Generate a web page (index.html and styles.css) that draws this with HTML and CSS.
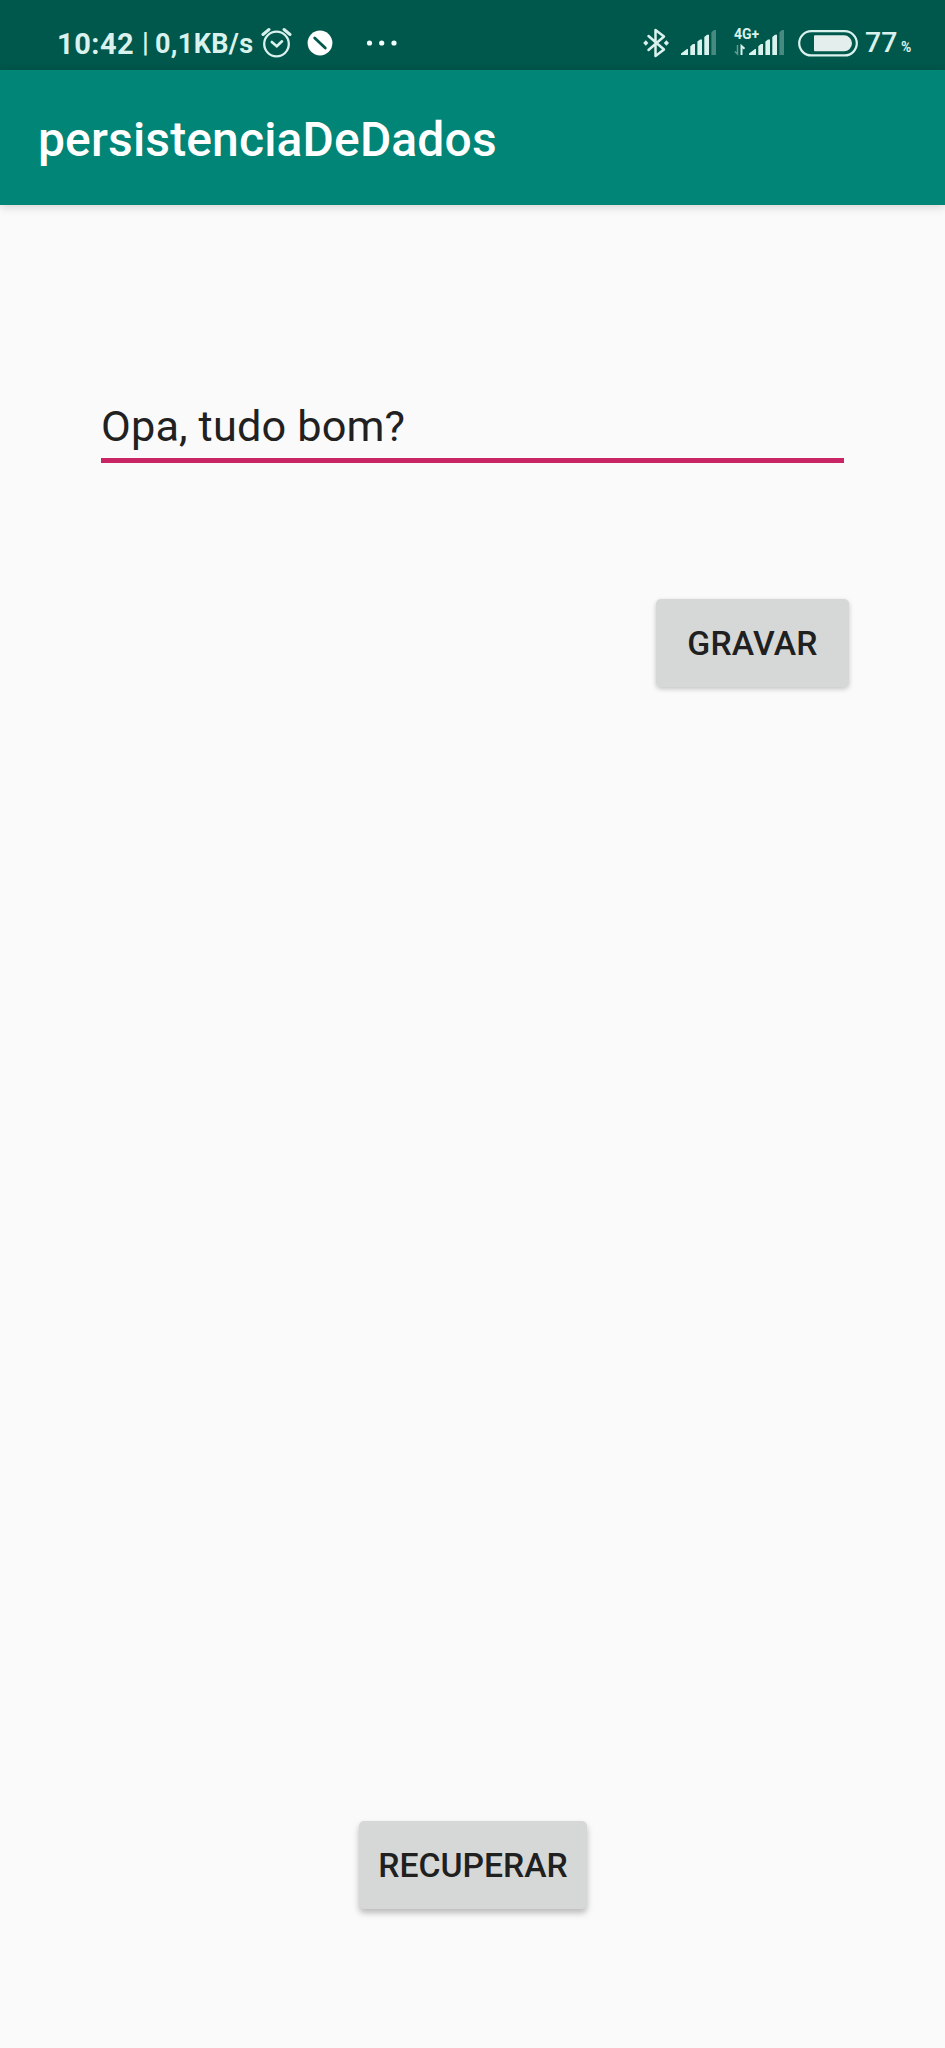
FILE: index.html
```html
<!DOCTYPE html>
<html lang="pt">
<head>
<meta charset="utf-8">
<title>persistenciaDeDados</title>
<link rel="stylesheet" href="styles.css">
</head>
<body>
<div class="status">
  <span class="clock">10:42</span>
  <span class="divider">|</span>
  <span class="speed">0,1KB/s</span>
  <svg class="alarm" width="32" height="32" viewBox="0 0 32 32" fill="none" stroke="#d9f2ed" stroke-width="2.3" stroke-linecap="round"><circle cx="15.5" cy="17" r="12.3"/><path d="M2 7.500 8 2.500M23 2.500l6 5" stroke-width="3"/><path d="m10.800 15 5 4.300 5.200-5" stroke-width="2.600"/></svg>
  <svg class="silent" width="26" height="26" viewBox="0 0 26 26"><circle cx="13" cy="13" r="12.400" fill="#fff"/><path d="m7.700 8 10.600 10" stroke="#00574b" stroke-width="2.800" stroke-linecap="round"/></svg>
  <svg class="more" width="32" height="8" viewBox="0 0 32 8" fill="#f2fffc"><circle cx="3.500" cy="4" r="2.600"/><circle cx="15.700" cy="4" r="2.600"/><circle cx="28" cy="4" r="2.600"/></svg>
  <span class="spacer"></span>
  <svg class="bluetooth" width="28" height="32" viewBox="0 0 28 32" fill="none" stroke="#d9f2ed" stroke-width="2.500" stroke-linejoin="round" stroke-linecap="round"><path d="m5.500 9 15.500 13.500L12.500 29V3l8.500 6.500L5.500 23"/><path d="m2.800 13.300 2.600 2.700-2.600 2.700L.2 16ZM23.400 13.300l2.600 2.700-2.600 2.700-2.600-2.700Z" fill="#d9f2ed" stroke="none"/></svg>
  <svg class="signal" width="36" height="26" viewBox="0 0 36 26" fill="#d9f2ed"><path d="M0 25v-1.600L6 19h1v6ZM9.300 25V16.300L12 14h2v11ZM16.400 25V11.600L19 9.500h2V25ZM23.300 25V7L26 4.700h2V25Z"/><path d="M30.400 25V2.300L33 0h2v25Z" opacity=".33"/></svg>
  <div class="mobile">
    <span class="network">4G+</span>
    <svg width="12" height="12" viewBox="0 0 12 12" fill="none" stroke="#d9f2ed" stroke-width="1.500"><path d="M3.500 1v9L.8 7.500" opacity=".45"/><path d="M7.500 11V2l3 2.700" stroke-width="2"/></svg>
  </div>
  <svg class="signal signal-two" width="36" height="26" viewBox="0 0 36 26" fill="#d9f2ed"><path d="M0 25v-1.600L6 19h1v6ZM9.300 25V16.300L12 14h2v11ZM16.400 25V11.600L19 9.500h2V25ZM23.300 25V7L26 4.700h2V25Z"/><path d="M30.400 25V2.300L33 0h2v25Z" opacity=".33"/></svg>
  <svg class="battery" width="60" height="27" viewBox="0 0 60 27"><rect x="1.200" y="1.200" width="57.600" height="24.200" rx="12.100" fill="none" stroke="#d9f2ed" stroke-width="2.200"/><path d="M17 5.300h29a8 8 0 0 1 0 16H17a1 1 0 0 1-1-1v-14a1 1 0 0 1 1-1Z" fill="#e4efed"/></svg>
  <span class="level">77</span>
  <span class="percent">%</span>
</div>
<header class="appbar"><h1>persistenciaDeDados</h1></header>
<main class="content">
  <div class="field">Opa, tudo bom?</div>
  <button class="button save">GRAVAR</button>
  <button class="button restore">RECUPERAR</button>
</main>
</body>
</html>
```
FILE: styles.css
```css
body {
  margin: 0;
  height: 2048px;
  display: flex;
  flex-direction: column;
  background: #fafafa;
  font-family: Roboto, sans-serif;
  overflow: hidden;
}

.status {
  box-sizing: border-box;
  height: 70px;
  flex: none;
  display: flex;
  align-items: flex-start;
  padding-left: 57px;
  background: #00574b;
  color: #d9f2ed;
  line-height: 34px;
  white-space: nowrap;
}

.status > * { flex: none; }
.status .spacer { flex: 1; }

.clock {
  width: 85px;
  margin-top: 27px;
  font-size: 29px;
  font-weight: 700;
  letter-spacing: 0.5px;
}

.divider {
  width: 13px;
  margin-top: 26px;
  font-size: 27px;
  font-weight: 700;
}

.speed {
  width: 106px;
  margin-top: 27px;
  font-size: 27px;
  font-weight: 700;
  letter-spacing: 0.35px;
}

.alarm { margin-top: 27px; }
.silent { margin: 30px 0 0 14px; }
.more { margin: 39px 0 0 33px; }
.bluetooth { margin-top: 27px; }
.signal { margin: 30px 0 0 10px; }

.mobile {
  width: 14px;
  margin: 26px 0 0 17px;
}

.mobile svg { display: block; }

.network {
  display: block;
  height: 18px;
  font-size: 14px;
  font-weight: 700;
  line-height: 16px;
}

.signal-two { margin-left: 1px; }
.battery { margin: 30px 0 0 13px; }

.level {
  width: 36px;
  margin: 26px 0 0 7px;
  font-size: 28.5px;
  font-weight: 500;
}

.percent {
  width: 44px;
  margin-top: 30px;
  font-size: 14px;
  font-weight: 700;
}

.appbar {
  box-sizing: border-box;
  height: 135px;
  flex: none;
  padding: 42px 38px 0;
  background: #008577;
  box-shadow: 0 2px 9px rgba(0, 0, 0, 0.16);
}

.appbar h1 {
  margin: 0;
  color: #fff;
  font-size: 48px;
  font-weight: 500;
  line-height: 56px;
  letter-spacing: 0.14px;
}

.content {
  flex: 1;
  display: flex;
  flex-direction: column;
  padding: 190px 96px 139px 101px;
}

.field {
  box-sizing: border-box;
  width: 743px;
  height: 68px;
  border-bottom: 5px solid #c92464;
  color: #212121;
  font-size: 43.3px;
  line-height: 63px;
  letter-spacing: 0.14px;
}

.button {
  box-sizing: border-box;
  height: 88px;
  padding: 2px 0 0;
  border: 0;
  border-radius: 5px;
  background: #d6d8d7;
  box-shadow: 0 2px 5px rgba(0, 0, 0, 0.22);
  color: #202020;
  font: 500 33.7px/86px Roboto, sans-serif;
}

.save {
  width: 193px;
  margin-top: 136px;
  align-self: flex-end;
  letter-spacing: 0.2px;
}

.restore {
  width: 228px;
  margin: auto 0 0 258px;
  box-shadow: 0 4px 6px rgba(0, 0, 0, 0.26);
}
```
